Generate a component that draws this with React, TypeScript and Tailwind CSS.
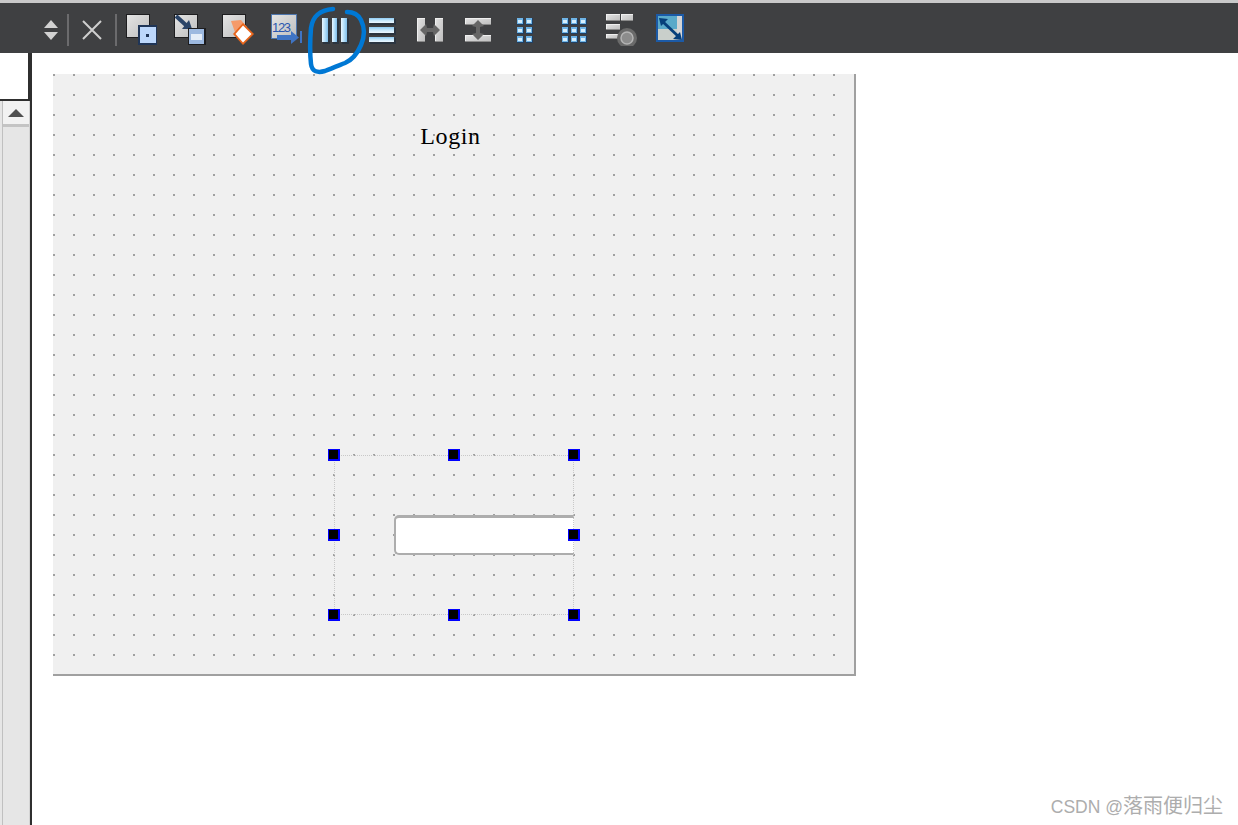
import type { ReactNode } from "react";

function Icon({ children }: { children: ReactNode }) {
  return (
    <svg width="32" height="32" viewBox="0 0 32 32" shapeRendering="crispEdges" className="shrink-0">
      {children}
    </svg>
  );
}

function GraySheet({ x = 1, y = 1, w = 22, h = 22 }: { x?: number; y?: number; w?: number; h?: number }) {
  return (
    <>
      <rect x={x - 1} y={y - 1} width={w + 2} height={h + 2} fill="#1d1d1f" />
      <rect x={x} y={y} width={w} height={h} fill="url(#sheet)" />
    </>
  );
}

function BlueBar({ x, y, w, h, horizontal }: { x: number; y: number; w: number; h: number; horizontal?: boolean }) {
  return (
    <>
      <rect x={x + 1} y={y + 1} width={w + 1} height={h + 1} fill="#2b3540" />
      <rect x={x} y={y} width={w} height={h} fill={horizontal ? "url(#barV)" : "url(#barH)"} />
    </>
  );
}

function GrayBar({ x, y, w, h }: { x: number; y: number; w: number; h: number }) {
  return (
    <>
      <rect x={x} y={y} width={w} height={h} fill="url(#sheet)" />
      <rect x={x} y={y} width={w} height={1} fill="#efefef" />
      <rect x={x} y={y} width={1} height={h} fill="#efefef" />
      <rect x={x} y={y + h - 1} width={w} height={1} fill="#8a8a8a" />
    </>
  );
}

function Grid({ xs, ys }: { xs: number[]; ys: number[] }) {
  return (
    <>
      {ys.flatMap((y) =>
        xs.map((x) => (
          <g key={`${x}-${y}`}>
            <rect x={x} y={y} width="7" height="7" fill="#1f3f63" />
            <rect x={x} y={y} width="6" height="6" fill="#6fb4e6" />
            <rect x={x + 1} y={y + 2} width="4" height="3" fill="#d8effc" />
          </g>
        )),
      )}
    </>
  );
}

const icons = [
  <Icon key="front">
    <GraySheet />
    <rect x="12" y="11" width="19" height="20" fill="#1f3557" />
    <rect x="14" y="13" width="16" height="16" fill="#bcd7fb" />
    <rect x="20" y="20" width="3" height="3" fill="#1f3557" />
  </Icon>,
  <Icon key="back">
    <GraySheet />
    <path d="M2 2 L14 13" stroke="#2a4468" strokeWidth="4" shapeRendering="auto" />
    <path d="M8 15 L18 15 L15 6 Z" fill="#2a4468" shapeRendering="auto" />
    <rect x="14" y="14" width="18" height="17" fill="#1d1d1f" />
    <rect x="15" y="15" width="15" height="15" fill="#9db9e0" />
    <rect x="17" y="20" width="11" height="6" fill="#e4edf8" />
  </Icon>,
  <Icon key="tag">
    <GraySheet />
    <path d="M9 7 L19 6 L25 13 L14 21 Z" fill="#f59a6a" shapeRendering="auto" />
    <path d="M21 9 L32 20 L21 31 L11 20 Z" fill="#e8641a" shapeRendering="auto" />
    <path d="M21 11.5 L29.5 20 L21 28.5 L13.5 20 Z" fill="#ffffff" shapeRendering="auto" />
  </Icon>,
  <Icon key="order">
    <rect x="1" y="0" width="26" height="25" fill="#4e76ad" />
    <rect x="2" y="1" width="24" height="23" fill="url(#sheet)" />
    <text x="2" y="18" fontSize="13" fontFamily="Liberation Sans, sans-serif" fill="#2a56b0" textLength="19">
      123
    </text>
    <rect x="7" y="21" width="17" height="5" fill="#3f74c4" />
    <path d="M21 17 L29 23.5 L21 30 Z" fill="#3f74c4" shapeRendering="auto" />
    <rect x="30" y="17" width="2" height="12" fill="#3f74c4" />
  </Icon>,
  <Icon key="cols">
    <BlueBar x={4} y={4} w={6} h={24} />
    <BlueBar x={14} y={4} w={5} h={24} />
    <BlueBar x={23} y={4} w={6} h={24} />
  </Icon>,
  <Icon key="rows">
    <BlueBar x={3} y={4} w={25} h={5} horizontal />
    <BlueBar x={3} y={13} w={25} h={6} horizontal />
    <BlueBar x={3} y={23} w={25} h={5} horizontal />
  </Icon>,
  <Icon key="hsplit">
    <GrayBar x={3} y={4} w={8} h={24} />
    <GrayBar x={21} y={4} w={8} h={24} />
    <path d="M6 16 L12 10 L13 14 L19 14 L20 10 L26 16 L20 22 L19 18 L13 18 L12 22 Z" fill="#666666" shapeRendering="auto" />
  </Icon>,
  <Icon key="vsplit">
    <GrayBar x={3} y={4} w={26} h={7} />
    <GrayBar x={3} y={21} w={26} h={7} />
    <path d="M16 6 L22 12 L18 13 L18 19 L22 20 L16 26 L10 20 L14 19 L14 13 L10 12 Z" fill="#666666" shapeRendering="auto" />
  </Icon>,
  <Icon key="grid2">
    <Grid xs={[7, 16]} ys={[4, 13, 22]} />
  </Icon>,
  <Icon key="grid3">
    <Grid xs={[4, 13, 22]} ys={[4, 13, 22]} />
  </Icon>,
  <Icon key="form">
    <GrayBar x={0} y={0} w={14} h={7} />
    <GrayBar x={15} y={0} w={12} h={7} />
    <GrayBar x={0} y={10} w={14} h={6} />
    <GrayBar x={0} y={20} w={12} h={5} />
    <circle cx="21" cy="24" r="10" fill="#6a6a6a" shapeRendering="auto" />
    <circle cx="21" cy="24" r="6" fill="#8c8c8c" stroke="#b4b4b4" strokeWidth="1.5" shapeRendering="auto" />
  </Icon>,
  <Icon key="adjust">
    <rect x="2" y="0" width="28" height="28" fill="#1c5aa6" />
    <rect x="4" y="2" width="19" height="24" fill="#5aa9c9" />
    <rect x="4" y="15" width="19" height="11" fill="#c9cfcb" />
    <rect x="23" y="2" width="5" height="24" fill="#d4d4d4" />
    <path d="M8 7 L25 23" stroke="#063f7a" strokeWidth="3" shapeRendering="auto" />
    <path d="M5 4 L14 5 L7 12 Z M28 26 L19 25 L26 18 Z" fill="#063f7a" shapeRendering="auto" />
  </Icon>,
];

function Handle({ className }: { className: string }) {
  return (
    <div className={`absolute h-3 w-3 bg-[#0000ff] ${className}`}>
      <div className="ml-px mt-px h-[9px] w-[9px] bg-black" />
    </div>
  );
}

export default function App() {
  return (
    <div className="relative flex h-[825px] w-[1238px] flex-col overflow-hidden bg-white font-['Liberation_Sans',sans-serif]">
      <svg width="0" height="0" className="absolute">
        <defs>
          <linearGradient id="sheet" x1="0" y1="0" x2="1" y2="1">
            <stop offset="0" stopColor="#e4e4e4" />
            <stop offset="1" stopColor="#bdbdbd" />
          </linearGradient>
          <linearGradient id="barH" x1="0" y1="0" x2="1" y2="0">
            <stop offset="0" stopColor="#e9f6ff" />
            <stop offset="0.5" stopColor="#b5e0fa" />
            <stop offset="1" stopColor="#7fbce8" />
          </linearGradient>
          <linearGradient id="barV" x1="0" y1="0" x2="0" y2="1">
            <stop offset="0" stopColor="#8ecbf3" />
            <stop offset="0.5" stopColor="#c6e8fc" />
            <stop offset="1" stopColor="#eef8ff" />
          </linearGradient>
        </defs>
      </svg>

      <div className="h-[3px] bg-[#c9c9c9]" />

      <header className="flex h-[50px] items-center bg-[#3f4042] pt-[3px]">
        <div className="ml-[44px] flex w-[14px] flex-col gap-[4px]">
          <div className="h-0 w-0 border-x-[7px] border-b-[8px] border-x-transparent border-b-[#d2d2d2]" />
          <div className="h-0 w-0 border-x-[7px] border-t-[8px] border-x-transparent border-t-[#d2d2d2]" />
        </div>
        <div className="ml-[9px] h-[32px] w-[2px] bg-[#6b6b6d]" />
        <svg width="22" height="22" viewBox="0 0 22 22" className="ml-[12px]">
          <path d="M2 2 L20 20 M20 2 L2 20" stroke="#cfcfcf" strokeWidth="2" />
        </svg>
        <div className="ml-[12px] h-[32px] w-[2px] bg-[#6b6b6d]" />
        <div className="ml-[9px] flex">
          {icons.map((icon, i) => (
            <div key={i} className="flex w-12 justify-start">
              {icon}
            </div>
          ))}
        </div>
      </header>

      <div className="flex flex-1">
        <aside className="flex w-[32px] flex-col border-r-2 border-[#2f2f2f]">
          <div className="h-[48px] border-b-2 border-r-2 border-[#2f2f2f] bg-white" />
          <div className="flex flex-1 flex-col bg-[#e6e6e6] pl-[2px]">
            <div className="flex flex-1 flex-col border-x border-l-[#c0c0c0] border-r-[#d4d4d4]">
              <div className="flex h-[26px] items-center justify-center border-b-[3px] border-[#c4c4c4] bg-[#f2f2f2]">
                <div className="h-0 w-0 border-x-[8px] border-b-[8px] border-x-transparent border-b-[#505050]" />
              </div>
            </div>
          </div>
        </aside>

        <main className="flex-1 pl-[21px] pt-[21px]">
          <div className="relative h-[602px] w-[803px] border-b-2 border-r-2 border-[#a0a0a0] bg-[#f0f0f0] bg-[conic-gradient(at_2px_2px,transparent_270deg,#a0a0a0_270deg)] bg-[size:20px_20px]">
            {/* the dot grid stops short of the right edge */}
            <div className="absolute inset-y-0 right-0 w-[4px] bg-[#f0f0f0]" />

            <div className="flex justify-center pr-[6px] pt-[48px]">
              <span className="text-[24px] leading-[28px] tracking-[0.6px] text-black font-['Liberation_Serif',serif]">
                Login
              </span>
            </div>

            {/* selected line edit */}
            <div className="absolute left-[341px] top-[441px] h-[40px] w-[180px] rounded-l-[5px] border-y-2 border-l-2 border-t-[3px] border-[#adadad] bg-white" />

            <div className="absolute left-[281px] top-[381px] h-[160px] w-[240px] border border-dotted border-[#c8c8c8]" />
            <Handle className="left-[275px] top-[375px]" />
            <Handle className="left-[395px] top-[375px]" />
            <Handle className="left-[515px] top-[375px]" />
            <Handle className="left-[275px] top-[455px]" />
            <Handle className="left-[515px] top-[455px]" />
            <Handle className="left-[275px] top-[535px]" />
            <Handle className="left-[395px] top-[535px]" />
            <Handle className="left-[515px] top-[535px]" />
          </div>
        </main>
      </div>

      {/* pen mark over the toolbar */}
      <svg width="80" height="80" viewBox="300 0 80 80" className="pointer-events-none absolute left-[300px] top-0">
        <path
          d="M333 9 C322 10 313 14 311 28 C310 40 310 55 311 64 C312 72 318 73 325 71 C332 68 340 65 345 63 C352 60 358 52 361 45 C365 36 365 28 361 20 C358 14 352 12 347 12"
          fill="none"
          stroke="#0078d4"
          strokeWidth="4.5"
          strokeLinecap="round"
        />
      </svg>

      <div className="absolute bottom-[8px] right-[15px] flex items-baseline leading-[20px] text-[#adadad] font-['Liberation_Sans','Noto_Sans_CJK_SC',sans-serif]">
        <span className="text-[17.5px]">CSDN @</span>
        <span className="text-[20px]">落雨便归尘</span>
      </div>
    </div>
  );
}
